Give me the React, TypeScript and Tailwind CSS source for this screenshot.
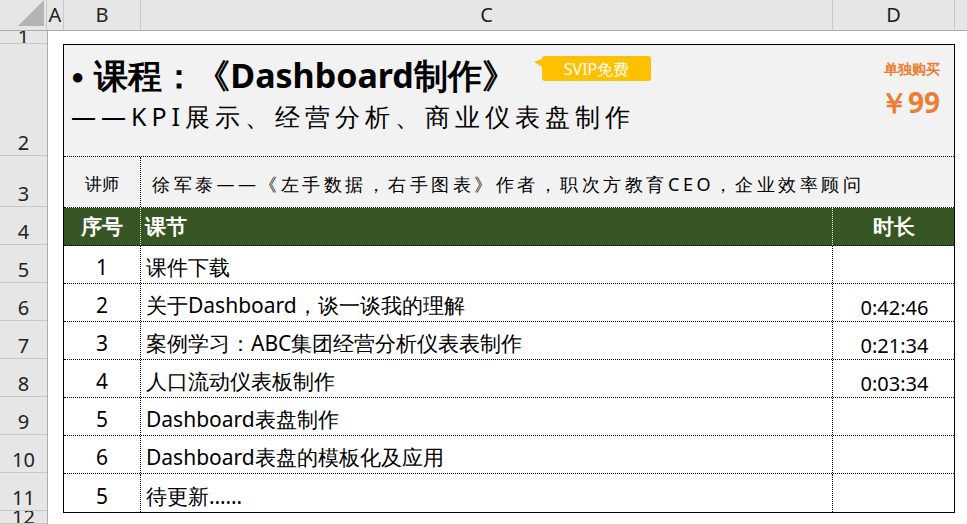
const rowHeights = [
  { n: '1', h: 13 },
  { n: '2', h: 112 },
  { n: '3', h: 51 },
  { n: '4', h: 38 },
  { n: '5', h: 38 },
  { n: '6', h: 38 },
  { n: '7', h: 38 },
  { n: '8', h: 38 },
  { n: '9', h: 38 },
  { n: '10', h: 38 },
  { n: '11', h: 38 },
  { n: '12', h: 13 },
]

const lessons = [
  { no: '1', title: '课件下载', time: '' },
  { no: '2', title: '关于Dashboard，谈一谈我的理解', time: '0:42:46' },
  { no: '3', title: '案例学习：ABC集团经营分析仪表表制作', time: '0:21:34' },
  { no: '4', title: '人口流动仪表板制作', time: '0:03:34' },
  { no: '5', title: 'Dashboard表盘制作', time: '' },
  { no: '6', title: 'Dashboard表盘的模板化及应用', time: '' },
  { no: '5', title: '待更新……', time: '' },
]

const sans = "font-['Liberation_Sans','Noto_Sans_CJK_SC',sans-serif]"
const serif = "font-['Liberation_Serif','Noto_Serif_CJK_SC','Noto_Sans_CJK_SC',serif]"

export default function App() {
  return (
    <div className={`w-[967px] h-[524px] overflow-hidden bg-white text-black ${sans}`}>
      {/* column headers */}
      <div className="flex h-[31px] bg-[#e6e6e6] border-b border-[#ababab] text-[20px] text-[#222]">
        <div className="w-[47px] border-r border-[#c8c8c8] relative">
          <div className="absolute right-[2px] bottom-[4px] w-0 h-0 border-l-[26px] border-l-transparent border-b-[26px] border-b-[#b4b4b4]" />
        </div>
        <div className="w-[17px] border-r border-[#c8c8c8] flex items-center justify-center">A</div>
        <div className="w-[77px] border-r border-[#c8c8c8] flex items-center justify-center">B</div>
        <div className="w-[692px] border-r border-[#c8c8c8] flex items-center justify-center">C</div>
        <div className="w-[122px] border-r border-[#c8c8c8] flex items-center justify-center">D</div>
        <div className="flex-1" />
      </div>
      <div className="flex">
        {/* row headers */}
        <div className="w-[48px] shrink-0 bg-[#e6e6e6] border-r border-[#ababab] text-[20px] text-[#222]">
          {rowHeights.map((r) => (
            <div
              key={r.n}
              style={{ height: r.h }}
              className={`border-b border-[#c8c8c8] flex justify-center leading-none overflow-hidden ${r.h < 20 ? 'items-center' : 'items-end pb-[2px]'}`}
            >
              {r.n}
            </div>
          ))}
        </div>
        {/* sheet */}
        <div className="pl-[15px] pt-[13px]">
          <div className="w-[892px] border border-black">
            {/* title */}
            <div className="h-[112px] bg-[#f2f2f2] border-b border-dotted border-black flex">
              <div className="flex-1 pl-[7px] pt-[13px] relative">
                <div className="flex items-center text-[34px] font-bold font-['Noto_Sans_CJK_SC',sans-serif] leading-none">
                  <span className="text-[22px] mr-[10px]">●</span>
                  课程：《Dashboard制作》
                </div>
                <div className={`mt-[12px] text-[25px] tracking-[5px] leading-none ${serif}`}>
                  ——KPI展示、经营分析、商业仪表盘制作
                </div>
                <div className="absolute left-[478px] top-[11px] h-[25px] w-[109px] bg-[#ffc000] rounded-[3px] text-white text-[16px] flex items-center justify-center font-['Noto_Sans_CJK_SC',sans-serif]">
                  <span className="absolute -left-[8px] top-[2px] w-0 h-0 border-t-[4px] border-t-transparent border-b-[6px] border-b-transparent border-r-[10px] border-r-[#ffc000]" />
                  SVIP免费
                </div>
              </div>
              <div className="w-[121px] flex flex-col items-end pr-[14px] pt-[17px] text-[#ed7d31] font-bold font-['Noto_Sans_CJK_SC',sans-serif]">
                <div className="text-[14px] leading-none">单独购买</div>
                <div className="text-[28px] leading-none mt-[12px]">￥99</div>
              </div>
            </div>
            {/* teacher */}
            <div className="h-[51px] bg-[#f2f2f2] flex border-b border-dotted border-black">
              <div className="w-[77px] border-r border-dotted border-black flex items-center justify-center pt-[4px] text-[17px] font-['Noto_Sans_CJK_SC',sans-serif]">
                讲师
              </div>
              <div className={`flex-1 flex items-center pl-[11px] pt-[4px] text-[18px] tracking-[3.5px] ${serif}`}>
                徐军泰——《左手数据，右手图表》作者，职次方教育CEO，企业效率顾问
              </div>
            </div>
            {/* header */}
            <div className="h-[38px] bg-[#375623] text-white text-[21px] font-bold flex border-b border-dotted border-black font-['Noto_Sans_CJK_SC',sans-serif]">
              <div className="w-[77px] border-r border-dotted border-white flex items-center justify-center">序号</div>
              <div className="w-[692px] border-r border-dotted border-white flex items-center pl-[4px]">课节</div>
              <div className="flex-1 flex items-center justify-center">时长</div>
            </div>
            {lessons.map((l, i) => (
              <div
                key={i}
                className={`h-[38px] flex text-[21px] ${i < lessons.length - 1 ? 'border-b border-dotted border-black' : ''}`}
              >
                <div className="w-[77px] border-r border-dotted border-black flex items-end justify-center pb-[5px] leading-none">{l.no}</div>
                <div className="w-[692px] border-r border-dotted border-black flex items-end pl-[5px] pb-[5px] leading-none">{l.title}</div>
                <div className="flex-1 flex items-end justify-center pb-[3px] pl-[2px] leading-none text-[20px]">{l.time}</div>
              </div>
            ))}
          </div>
        </div>
      </div>
    </div>
  )
}
